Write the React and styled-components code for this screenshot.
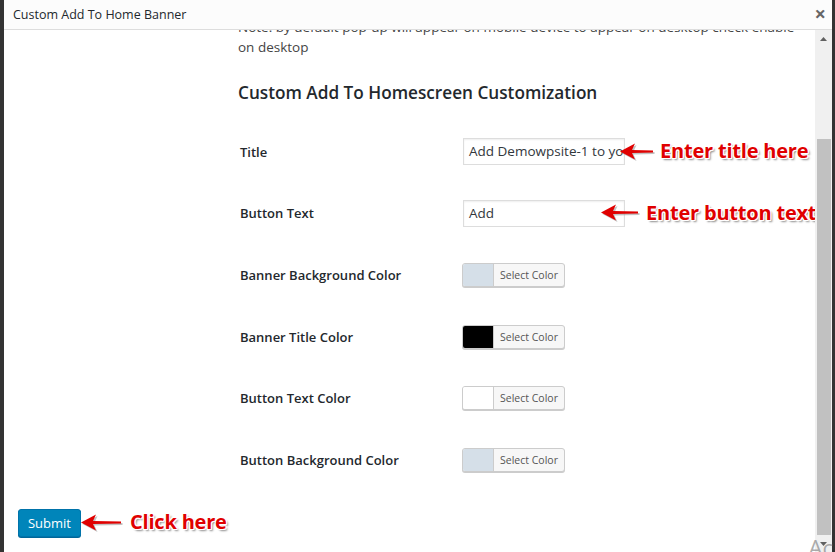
import styled, { createGlobalStyle } from "styled-components";

const GlobalStyle = createGlobalStyle`
  html, body {
    margin: 0;
    padding: 0;
    background: #333;
  }
  body {
    font-family: "Open Sans", "Noto Sans", sans-serif;
    color: #23282d;
  }
`;

const Page = styled.div`
  display: flex;
  height: 552px;
  overflow: hidden;
  padding: 0 3px 0 4px;
  position: relative;
`;

const Modal = styled.div`
  flex: 1;
  display: flex;
  flex-direction: column;
  background: #fff;
  min-width: 0;
`;

const Header = styled.div`
  height: 29px;
  flex: none;
  display: flex;
  align-items: center;
  justify-content: space-between;
  padding: 0 6px 0 9px;
  background: #fcfcfc;
  border-bottom: 1px solid #dddddd;
  position: relative;
  z-index: 1;
`;

const HeaderTitle = styled.div`
  font-size: 12.5px;
  color: #23282d;
`;

const Close = styled.div`
  font-size: 20px;
  font-weight: 700;
  color: #666;
  line-height: 1;
  margin-top: -2px;
`;

const Body = styled.div`
  flex: 1;
  display: flex;
  min-height: 0;
`;

const Content = styled.div`
  flex: 1;
  overflow: hidden;
`;

const Scrolled = styled.div`
  margin-top: -13px;
  padding-left: 14px;
`;

const Section = styled.div`
  padding-left: 220px;
`;

const Note = styled.p`
  margin: 0;
  font-size: 13.5px;
  line-height: 20px;
  color: #444;
  width: 560px;
`;

const Heading = styled.h2`
  margin: 25px 0 0;
  font-size: 17.2px;
  font-weight: 600;
  line-height: 22px;
  color: #23282d;
`;

const Rows = styled.div`
  margin-top: 17px;
  display: flex;
  flex-direction: column;
`;

const Row = styled.div`
  display: grid;
  grid-template-columns: 225px 1fr;
  align-items: center;
  height: 61.6px;
`;

const Label = styled.div`
  padding-left: 2px;
  font-size: 13px;
  font-weight: 600;
  color: #23282d;
`;

const Control = styled.div`
  display: flex;
  align-items: center;
`;

const TextInput = styled.div`
  width: 162px;
  height: 27px;
  box-sizing: border-box;
  border: 1px solid #ddd;
  box-shadow: inset 0 1px 2px rgba(0, 0, 0, 0.07);
  background: #fff;
  padding: 0 5px;
  font-size: 13.5px;
  line-height: 25px;
  color: #32373c;
  white-space: nowrap;
  overflow: hidden;
`;

const ColorButton = styled.div`
  display: flex;
  height: 24px;
  width: 103px;
  margin-left: -1px;
  box-sizing: border-box;
  border: 1px solid #ccc;
  border-radius: 3px;
  background: #f7f7f7;
  box-shadow: 0 1px 0 #ccc;
  overflow: hidden;
`;

const Swatch = styled.div`
  width: 30px;
  background: ${(p) => p.$color};
  border-right: 1px solid #ccc;
`;

const SwatchLabel = styled.div`
  flex: 1;
  text-align: center;
  font-size: 10.5px;
  line-height: 22px;
  color: #555;
`;

const Callout = styled.div`
  display: flex;
  align-items: center;
  margin-left: ${(p) => p.$offset}px;
  gap: ${(p) => p.$gap}px;
`;

const CalloutText = styled.span`
  font-family: "Open Sans", sans-serif;
  font-weight: 700;
  font-size: 20px;
  color: #e00000;
  white-space: nowrap;
  letter-spacing: -0.2px;
  margin-top: -2px;
  text-shadow: 1px 0 0 #fff, -1px 0 0 #fff, 0 1px 0 #fff, 0 -1px 0 #fff,
    1px 1px 0 #fff, -1px -1px 0 #fff, 1px -1px 0 #fff, -1px 1px 0 #fff,
    2px 2px 2px rgba(0, 0, 0, 0.45);
`;

const Footer = styled.div`
  display: flex;
  align-items: center;
  margin-top: 18px;
`;

const Submit = styled.div`
  width: 63px;
  height: 28px;
  box-sizing: border-box;
  background: #0085ba;
  border: 1px solid #0073aa;
  border-radius: 3px;
  box-shadow: 0 1px 0 #006799;
  color: #fff;
  font-size: 13px;
  line-height: 26px;
  text-align: center;
`;

const Scrollbar = styled.div`
  width: 17px;
  flex: none;
  background: #f0f0f0;
  display: flex;
  flex-direction: column;
  align-items: center;
`;

const ScrollArrow = styled.div`
  height: 17px;
  flex: none;
  display: flex;
  align-items: center;
  justify-content: center;
`;

const Thumb = styled.div`
  width: 14px;
  margin-left: 1px;
  margin-top: ${(p) => p.$top}px;
  flex: 1;
  background: #c1c1c1;
`;

const Watermark = styled.div`
  position: absolute;
  right: 2px;
  bottom: -10px;
  font-family: "Open Sans", sans-serif;
  font-size: 22px;
  color: rgba(150, 150, 150, 0.8);
`;

const Arrow = ({ width = 36 }) => (
  <svg width={width} height="18" viewBox={`0 0 ${width} 18`} style={{ overflow: "visible" }}>
    <path
      d={`M0 8.5 L15 0.5 L12 7 L${width} 7.5 L${width} 9.5 L12 10 L15 16.5 Z`}
      fill="#9a9a9a"
      opacity="0.6"
      transform="translate(1.5 1.5)"
    />
    <path
      d={`M0 8.5 L15 0.5 L12 7 L${width} 7.5 L${width} 9.5 L12 10 L15 16.5 Z`}
      fill="#e00000"
    />
  </svg>
);

const Tri = ({ up }) => (
  <svg width="7" height="4" viewBox="0 0 7 4">
    <path d={up ? "M0 4 L3.5 0 L7 4 Z" : "M0 0 L3.5 4 L7 0 Z"} fill="#606060" />
  </svg>
);

const colorFields = [
  { label: "Banner Background Color", color: "#d5dfe8" },
  { label: "Banner Title Color", color: "#000" },
  { label: "Button Text Color", color: "#fff" },
  { label: "Button Background Color", color: "#d5dfe8" },
];

export default function App() {
  return (
    <>
      <GlobalStyle />
      <Page>
        <Modal>
          <Header>
            <HeaderTitle>Custom Add To Home Banner</HeaderTitle>
            <Close>&times;</Close>
          </Header>
          <Body>
            <Content>
              <Scrolled>
                <Section>
                  <Note>
                    Note: by default pop-up will appear on mobile device to appear on desktop check enable
                    on desktop
                  </Note>
                  <Heading>Custom Add To Homescreen Customization</Heading>
                  <Rows>
                    <Row>
                      <Label>Title</Label>
                      <Control>
                        <TextInput>Add Demowpsite-1 to your Homescreen</TextInput>
                        <Callout $offset={-5} $gap={7}>
                          <Arrow width={33} />
                          <CalloutText>Enter title here</CalloutText>
                        </Callout>
                      </Control>
                    </Row>
                    <Row>
                      <Label>Button Text</Label>
                      <Control>
                        <TextInput>Add</TextInput>
                        <Callout $offset={-24} $gap={8}>
                          <Arrow width={37} />
                          <CalloutText>Enter button text</CalloutText>
                        </Callout>
                      </Control>
                    </Row>
                    {colorFields.map((f) => (
                      <Row key={f.label}>
                        <Label>{f.label}</Label>
                        <Control>
                          <ColorButton>
                            <Swatch $color={f.color} />
                            <SwatchLabel>Select Color</SwatchLabel>
                          </ColorButton>
                        </Control>
                      </Row>
                    ))}
                  </Rows>
                </Section>
                <Footer>
                  <Submit>Submit</Submit>
                  <Callout $offset={0} $gap={9}>
                    <Arrow width={40} />
                    <CalloutText>Click here</CalloutText>
                  </Callout>
                </Footer>
              </Scrolled>
            </Content>
            <Scrollbar>
              <ScrollArrow>
                <Tri up />
              </ScrollArrow>
              <Thumb $top={92} />
              <ScrollArrow>
                <Tri />
              </ScrollArrow>
            </Scrollbar>
          </Body>
        </Modal>
        <Watermark>Ac</Watermark>
      </Page>
    </>
  );
}
